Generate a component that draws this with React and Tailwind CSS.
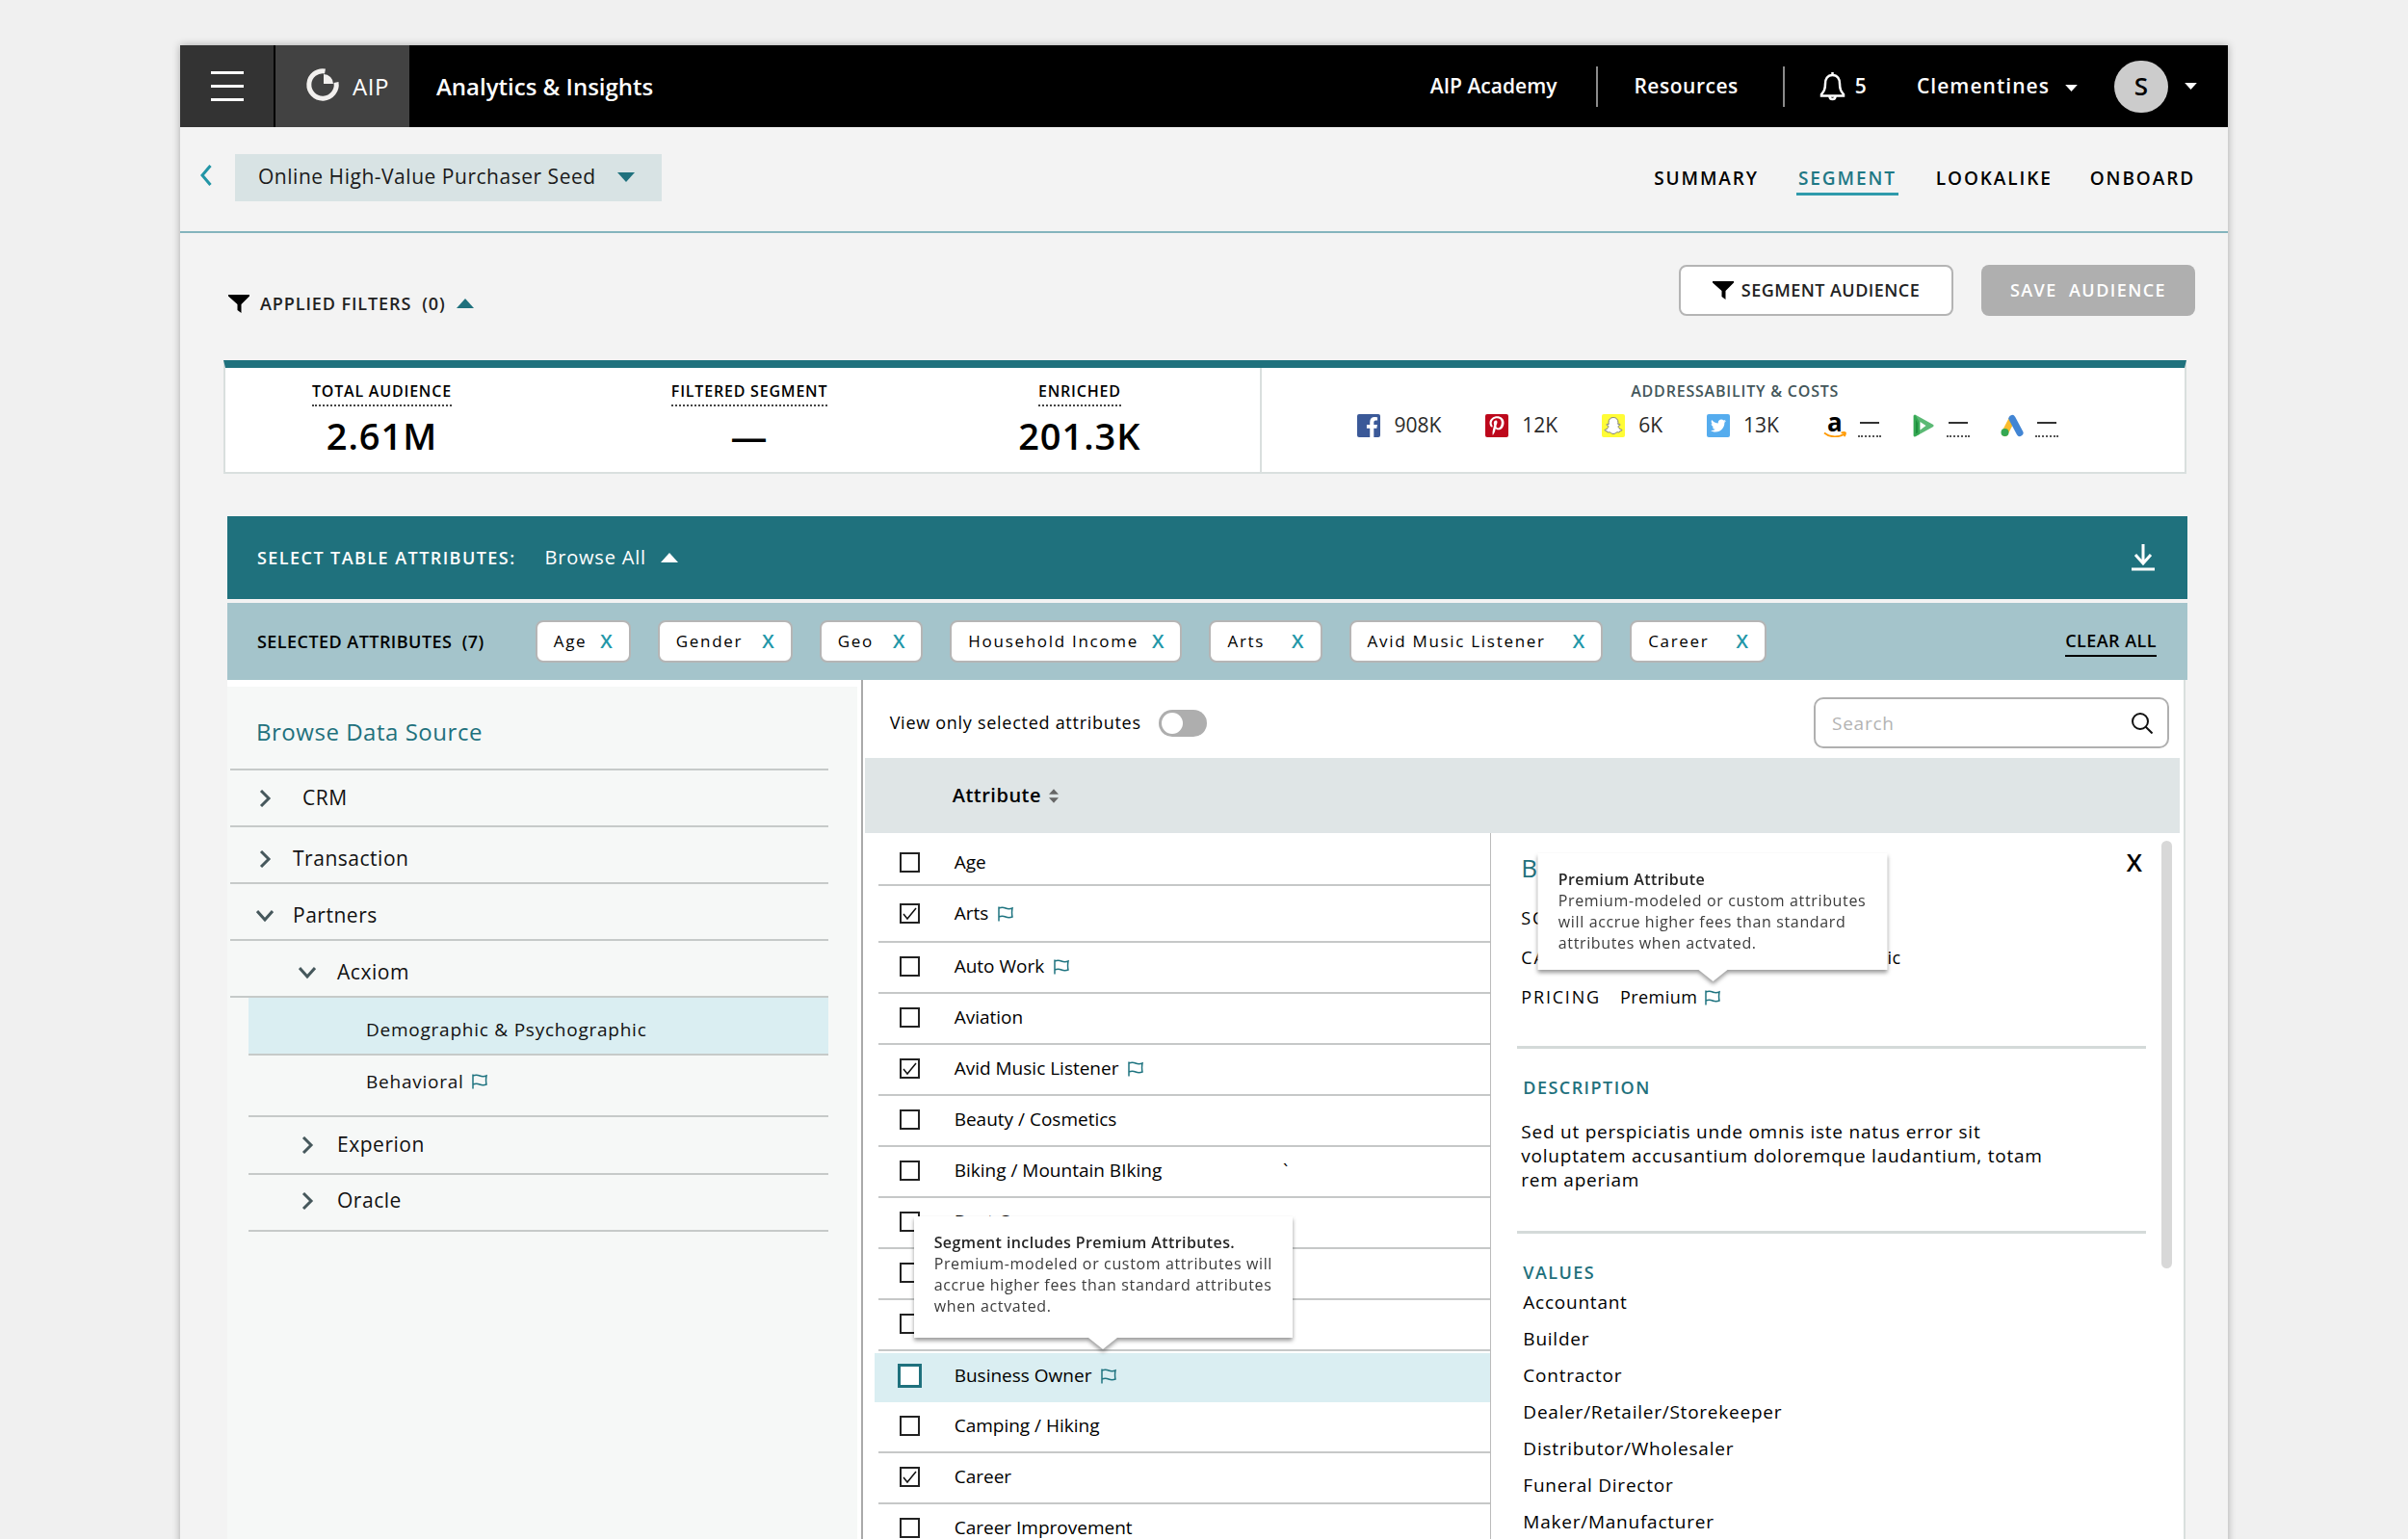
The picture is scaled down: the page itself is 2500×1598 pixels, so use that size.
import { useState } from "react";
import { FaFacebookF, FaPinterestP, FaSnapchatGhost, FaTwitter } from "react-icons/fa";

const tabs = ["SUMMARY", "SEGMENT", "LOOKALIKE", "ONBOARD"];

const chips = [
  { name: "Age", gap: "gap-[14px]" },
  { name: "Gender", gap: "gap-5" },
  { name: "Geo", gap: "gap-5" },
  { name: "Household Income", gap: "gap-[14px]" },
  { name: "Arts", gap: "gap-7" },
  { name: "Avid Music Listener", gap: "gap-7" },
  { name: "Career", gap: "gap-7" },
];

const attributes = [
  { name: "Age", height: "h-[55px] pt-2" },
  { name: "Arts", premium: true, checked: true, height: "h-[59px]" },
  { name: "Auto Work", premium: true },
  { name: "Aviation" },
  { name: "Avid Music Listener", premium: true, checked: true },
  { name: "Beauty / Cosmetics" },
  { name: "Biking / Mountain BIking", note: "`" },
  { name: "Boat Owner" },
  { name: "Book Reading" },
  { name: "Budget Shopping" },
  { name: "Business Owner", premium: true, active: true },
  { name: "Camping / Hiking" },
  { name: "Career", checked: true },
  { name: "Career Improvement" },
];

const values = [
  "Accountant",
  "Builder",
  "Contractor",
  "Dealer/Retailer/Storekeeper",
  "Distributor/Wholesaler",
  "Funeral Director",
  "Maker/Manufacturer",
];

const Triangle = ({ up, className }) => (
  <svg viewBox="0 0 18 10" className={className} fill="currentColor" aria-hidden="true">
    {up ? <path d="M0 10 9 0l9 10z" /> : <path d="M0 0h18L9 10z" />}
  </svg>
);

const Funnel = () => (
  <svg viewBox="0 0 22 19" className="h-[19px] w-[22px] shrink-0 text-black" fill="currentColor" aria-hidden="true">
    <path d="M0 0h22v1.500l-8.500 8.500v9l-4-3v-6L0 1.500z" />
  </svg>
);

const Flag = () => (
  <svg viewBox="0 0 16 16" className="h-4 w-4 shrink-0 text-[#1f7480]" fill="none" stroke="currentColor" strokeWidth="1.500" aria-hidden="true">
    <path d="M1 .5v15M1 2c2.500-1 4.500-1 7 0s4.500 1 7 0c-.6 3-.6 6 0 9-2.500 1-4.500 1-7 0s-4.500-1-7 0" />
  </svg>
);

const Chevron = ({ open }) => (
  <svg viewBox="0 0 18 18" className="h-[18px] w-[18px] shrink-0 text-[#46585c]" fill="none" stroke="currentColor" strokeWidth="3" aria-hidden="true">
    {open ? <path d="m1 4 8 9 8-9" /> : <path d="m5 1 8 8-8 8" />}
  </svg>
);

const Tooltip = ({ title, children, className }) => (
  <div role="tooltip" className={`absolute bottom-full z-10 drop-shadow-[0_3px_2px_rgba(0,0,0,0.4)] ${className}`}>
    <div className="h-full bg-white pt-4 pr-[19px] pl-[21px] text-[16px] leading-[22px] tracking-[0.04em] text-[#3c3c3c]">
      <p className="font-semibold tracking-wide text-[#262626]">{title}</p>
      <p>{children}</p>
    </div>
    <div className="absolute top-full left-1/2 h-0 w-0 -translate-x-1/2 border-x-[15px] border-t-[12px] border-x-transparent border-t-white" />
  </div>
);

const premiumText = "Premium-modeled or custom attributes will accrue higher fees than standard attributes when actvated.";

const Header = () => (
  <header className="flex h-[85px] items-stretch bg-black text-white">
    <button aria-label="Menu" className="flex w-[97px] flex-col items-center justify-center gap-[11px] bg-[#333]">
      <span className="h-[3px] w-[34px] bg-white" />
      <span className="h-[3px] w-[34px] bg-white" />
      <span className="h-[3px] w-[34px] bg-white" />
    </button>
    <a href="#home" className="ml-[2px] flex w-[139px] items-center gap-[13px] bg-[#424242] pl-[31px] text-[24px] tracking-wide">
      <svg viewBox="0 0 36 36" className="mb-1 h-9 w-9" fill="none" aria-hidden="true">
        <path d="M20.500 4A14.200 14.200 0 1 0 32 15.500" stroke="#f2f0ee" strokeWidth="5" />
        <path d="M19 7a10 10 0 0 1 10 10H19z" fill="#f2f0ee" />
      </svg>
      AIP
    </a>
    <h1 className="flex items-center pl-7 text-[24px] font-semibold">Analytics &amp; Insights</h1>
    <nav className="ml-auto flex items-center pr-8 text-[21px] font-semibold">
      <a href="#academy">AIP Academy</a>
      <span className="mr-[37px] ml-[41px] h-[42px] w-[2px] bg-[#8a8a8a]" />
      <a href="#resources" className="tracking-wide">Resources</a>
      <span className="mr-9 ml-[46px] h-[42px] w-[2px] bg-[#8a8a8a]" />
      <button aria-label="5 notifications" className="flex items-center gap-[10px]">
        <svg viewBox="0 0 27 30" className="h-[30px] w-[27px]" fill="none" stroke="currentColor" strokeWidth="2.500" aria-hidden="true">
          <path d="M13.500 3C8 3 6 7.500 6 12c0 6-1.500 8-4 11v1.500h23V23c-2.500-3-4-5-4-11 0-4.500-2-9-7.500-9zM13.500 3V0M10.500 25c0 4 6 4 6 0" />
        </svg>
        5
      </button>
      <button className="ml-[52px] flex items-center gap-4 tracking-wider">
        Clementines
        <Triangle className="mt-1 h-[7px] w-[13px]" />
      </button>
      <button aria-label="Account" className="ml-[38px] flex items-center gap-[17px]">
        <span className="flex h-[54px] w-14 items-center justify-center rounded-full bg-[#ccc] text-[26px] text-black">S</span>
        <Triangle className="h-[7px] w-[13px]" />
      </button>
    </nav>
  </header>
);

const SubHeader = () => (
  <div className="flex h-[110px] items-center border-b-2 border-[#84b4bd] pr-[34px] pb-1 pl-5">
    <a href="#back" aria-label="Back" className="pb-1 text-[#2295a6]">
      <svg viewBox="0 0 13 22" className="h-[22px] w-[13px]" fill="none" stroke="currentColor" strokeWidth="3" aria-hidden="true">
        <path d="M11.500 1 3 11l8.500 10" />
      </svg>
    </a>
    <button className="ml-6 flex h-[49px] items-center gap-[22px] bg-[#d8e3e4] pr-7 pl-6 text-[21px] tracking-wide text-[#1a1a1a]">
      Online High-Value Purchaser Seed
      <Triangle className="h-[10px] w-[18px] text-[#1f717d]" />
    </button>
    <nav className="ml-auto flex gap-[39px] pt-1 text-[19px] leading-[30px] font-semibold tracking-widest text-black">
      {tabs.map((tab) => (
        <a
          key={tab}
          href={`#${tab.toLowerCase()}`}
          className={tab === "SEGMENT" ? "border-b-[3px] border-[#2f9aab] px-[2px] text-[#1f7885]" : "border-b-[3px] border-transparent"}
        >
          {tab}
        </a>
      ))}
    </nav>
  </div>
);

const Stat = ({ label, value }) => (
  <div className="flex flex-col items-center font-semibold">
    <span className="border-b-2 border-dotted border-[#444] pb-[2px] text-[16px] leading-6 tracking-wider">{label}</span>
    <span className="text-[38px] leading-[60px] tracking-wide">{value}</span>
  </div>
);

const channels = [
  {
    label: "Facebook",
    value: "908K",
    icon: (
      <span className="flex h-6 w-6 items-end justify-end rounded-[2px] bg-[#3b5998] pr-[2px] text-white">
        <FaFacebookF className="h-[21px] w-[13px]" />
      </span>
    ),
  },
  {
    label: "Pinterest",
    value: "12K",
    icon: (
      <span className="flex h-6 w-6 items-center justify-center rounded-[2px] bg-[#bd081c] text-white">
        <FaPinterestP className="h-5 w-5" />
      </span>
    ),
  },
  {
    label: "Snapchat",
    value: "6K",
    icon: (
      <span className="flex h-6 w-6 items-center justify-center rounded-[2px] bg-[#fffc36] text-white">
        <FaSnapchatGhost className="h-[18px] w-[18px] overflow-visible" stroke="#777" strokeWidth="28" />
      </span>
    ),
  },
  {
    label: "Twitter",
    value: "13K",
    icon: (
      <span className="flex h-6 w-6 items-center justify-center rounded-[2px] bg-[#55acee] text-white">
        <FaTwitter className="h-4 w-4" />
      </span>
    ),
  },
  {
    label: "Amazon",
    icon: (
      <span className="relative flex h-6 w-6 justify-center text-[26px] leading-[16px] font-bold text-black">
        a
        <svg viewBox="0 0 24 24" className="absolute inset-0" fill="none" stroke="#f90" strokeWidth="1.800" aria-hidden="true">
          <path d="M1 19.500c6 5 15 5 21 1M18.500 19.500c2-.8 4.500-.8 4.500 0s-.5 2.500-1.500 3.500" />
        </svg>
      </span>
    ),
  },
  {
    label: "Display & Video 360",
    icon: (
      <svg viewBox="0 0 24 24" className="h-6 w-6" aria-hidden="true">
        <path d="M3 2 21 12 3 22z" fill="#5bb974" stroke="#5bb974" strokeWidth="3" strokeLinejoin="round" />
        <path d="M3 2v20l4-2V9z" fill="#1e8e3e" stroke="#34a853" strokeWidth="2" strokeLinejoin="round" />
        <path d="M8.500 8v8.500l6-4.500z" fill="#fff" />
      </svg>
    ),
  },
  {
    label: "Google Ads",
    icon: (
      <svg viewBox="0 0 24 24" className="h-6 w-6" fill="none" strokeWidth="7" strokeLinecap="round" aria-hidden="true">
        <path d="M4.500 19.500 11.500 6" stroke="#fbbc2c" />
        <path d="M12 4.500 20 19.500" stroke="#4285d4" />
        <circle cx="4.500" cy="19" r="4" fill="#34a853" />
      </svg>
    ),
  },
];

const Channel = ({ icon, label, value }) => (
  <li className={value ? "mr-[14px] flex items-center gap-[14px]" : "flex items-center gap-3"} aria-label={label}>
    {icon}
    {value ? (
      <span className="text-[21px] text-[#2a2a2a]">{value}</span>
    ) : (
      <span className="flex h-6 w-6 items-center justify-center border-b-2 border-dotted border-[#555] pb-1">
        <span className="h-[2px] w-5 bg-[#333]" />
      </span>
    )}
  </li>
);

const Check = ({ name, checked, active, onChange }) => (
  <span className="relative flex shrink-0">
    <input
      id={name}
      type="checkbox"
      checked={checked}
      onChange={onChange}
      className={active ? "h-[25px] w-[25px] appearance-none border-[3px] border-[#1f717d] bg-white" : "h-[21px] w-[21px] appearance-none border-2 border-[#222] bg-white"}
    />
    {checked && (
      <svg viewBox="0 0 21 21" className="pointer-events-none absolute inset-0" fill="none" stroke="#111" strokeWidth="1.500" aria-hidden="true">
        <path d="m4 11 4 5L17 5" />
      </svg>
    )}
  </span>
);

const AttributeRow = ({ item, checked, onToggle }) => (
  <li
    className={
      item.active
        ? "relative -ml-1 flex h-[53px] items-center gap-[34px] border-t-2 border-white bg-[#daeef2] pb-1 pl-6"
        : `flex items-center gap-9 border-b-2 border-[#c6c8c8] pl-[22px] ${item.height || "h-[53px] pb-[2px]"}`
    }
  >
    <Check name={item.name} checked={checked} active={item.active} onChange={onToggle} />
    <label htmlFor={item.name} className="flex items-center gap-[10px]">
      {item.name}
      {item.premium && <Flag />}
    </label>
    {item.note && <span className="mr-[210px] ml-auto">{item.note}</span>}
    {item.active && (
      <Tooltip title="Segment includes Premium Attributes." className="left-[41px] mb-4 h-[126px] w-[393px]">
        {premiumText}
      </Tooltip>
    )}
  </li>
);

const SourceRow = ({ label, open, sub, className, textClass }) => (
  <div className={`border-b-2 border-[#c6cac9] ${className}`}>
    <button className={`flex h-full items-center ${sub ? "gap-[22px]" : "gap-5"}`}>
      <Chevron open={open} />
      <span className={textClass}>{label}</span>
    </button>
  </div>
);

const Sidebar = () => (
  <aside className="mt-[7px] flex-1 bg-[#f6f8f7] pr-[30px] pl-[3px] text-[21px] tracking-wide text-[#111]">
    <h2 className="flex h-[87px] items-center border-b-2 border-[#c6cac9] pt-2 pl-[27px] text-[24px] text-[#1f717d]">Browse Data Source</h2>
    <SourceRow label="CRM" className="h-[59px] pl-[27px]" textClass="pl-[10px]" />
    <SourceRow label="Transaction" className="h-[59px] pt-2 pl-[27px]" />
    <SourceRow label="Partners" open className="h-[59px] pt-2 pl-[27px]" />
    <SourceRow label="Acxiom" open sub className="h-[59px] pt-2 pl-[71px]" />
    <div className="ml-[19px]">
      <button className="flex h-[60px] w-full items-center border-b-2 border-[#c6cac9] bg-[#daeef2] pt-2 pl-[122px] text-[19px] tracking-[0.04em]">
        Demographic &amp; Psychographic
      </button>
      <button className="flex h-16 w-full items-center gap-2 border-b-2 border-[#c6cac9] pb-2 pl-[122px] text-[19px] tracking-[0.04em]">
        Behavioral
        <Flag />
      </button>
      <SourceRow label="Experion" sub className="h-[60px] pl-[52px]" />
      <SourceRow label="Oracle" sub className="h-[59px] pb-1 pl-[52px]" />
    </div>
  </aside>
);

const Detail = () => (
  <section className="relative flex border-l border-[#bbb] pt-5 pl-[31px]">
    <div className="min-w-0 flex-1">
      <div className="flex h-8 items-start justify-between pr-1 text-[26px]">
        <h2 className="leading-8 text-[#1f717d]">Business Owner</h2>
        <button aria-label="Close" className="leading-5 font-semibold">X</button>
      </div>
      <dl className="mt-4 text-[18px] tracking-wide">
        <div className="flex h-[41px] items-center gap-5">
          <dt className="tracking-widest">SOURCE</dt>
          <dd>Acxiom</dd>
        </div>
        <div className="flex h-[41px] items-center gap-5">
          <dt className="tracking-widest">CATEGORY</dt>
          <dd>Demographic &amp; Psychographic</dd>
        </div>
        <div className="flex h-[41px] items-center gap-5">
          <dt className="tracking-widest">PRICING</dt>
          <dd className="flex items-center gap-2">
            Premium
            <span className="relative">
              <Flag />
              <Tooltip title="Premium Attribute" className="left-1/2 mb-[21px] h-[121px] w-[363px] -translate-x-1/2">
                {premiumText}
              </Tooltip>
            </span>
          </dd>
        </div>
      </dl>
      <hr className="mt-[30px] -ml-1 border-t-[3px] border-[#d4dad9]" />
      <h3 className="mt-7 pl-[2px] text-[18px] leading-6 font-semibold tracking-[0.08em] text-[#1f717d]">DESCRIPTION</h3>
      <p className="mt-[22px] max-w-[560px] text-[19px] leading-[25px] tracking-[0.04em]">
        Sed ut perspiciatis unde omnis iste natus error sit voluptatem accusantium doloremque laudantium, totam rem aperiam
      </p>
      <hr className="mt-10 -ml-1 border-t-[3px] border-[#d4dad9]" />
      <h3 className="mt-7 pl-[2px] text-[18px] leading-6 font-semibold tracking-[0.08em] text-[#1f717d]">VALUES</h3>
      <ul className="pl-[2px] text-[19px] leading-[38px] tracking-[0.04em]">
        {values.map((value) => (
          <li key={value}>{value}</li>
        ))}
      </ul>
    </div>
    <div className="-mt-3 mr-3 ml-4 h-[444px] w-[11px] rounded-full bg-[#d8d8d8]" />
  </section>
);

const App = () => {
  const [selected, setSelected] = useState(new Set(attributes.filter((a) => a.checked).map((a) => a.name)));

  const handleToggle = (name) => {
    setSelected((prev) => {
      const next = new Set(prev);
      next.has(name) ? next.delete(name) : next.add(name);
      return next;
    });
  };

  return (
    <div className="h-screen overflow-hidden bg-[#f0f0f0] px-[187px] pt-[47px] font-['Open_Sans',sans-serif] text-black">
      <div className="min-h-full bg-[#f3f3f3] shadow-[0_0_8px_rgba(0,0,0,0.3)]">
        <Header />
        <SubHeader />

        <div className="flex items-end pt-[33px] pr-[34px] pl-[50px]">
          <button className="flex h-[26px] items-center gap-[11px] text-[18px] font-semibold tracking-wider text-[#222]">
            <Funnel />
            <span>APPLIED FILTERS</span>
            <span>(0)</span>
            <Triangle up className="h-[10px] w-[18px] text-[#1f717d]" />
          </button>
          <button className="ml-auto flex h-[53px] w-[285px] items-center justify-center gap-2 rounded-lg border-2 border-[#b4b4b4] bg-white text-[18px] font-semibold tracking-wide text-[#222]">
            <Funnel />
            SEGMENT AUDIENCE
          </button>
          <button className="ml-[29px] h-[53px] w-[222px] rounded-lg bg-[#afafaf] text-[18px] font-semibold tracking-[0.08em] whitespace-pre text-white">
            {"SAVE  AUDIENCE"}
          </button>
        </div>

        {/* Audience totals */}
        <section className="mt-[46px] mr-[43px] ml-[45px] grid h-[118px] grid-cols-[1076fr_961fr] border-2 border-t-8 border-[#d9dfde] border-t-[#1f717d] bg-white">
          <div className="grid grid-cols-[326fr_440fr_248fr] pt-3 pr-16">
            <Stat label="TOTAL AUDIENCE" value="2.61M" />
            <Stat label="FILTERED SEGMENT" value="—" />
            <Stat label="ENRICHED" value="201.3K" />
          </div>
          <div className="border-l-2 border-[#d9dfde] pt-3">
            <h2 className="pl-6 text-center text-[16px] leading-6 font-semibold tracking-wider text-[#43565a]">ADDRESSABILITY &amp; COSTS</h2>
            <ul className="flex gap-8 pt-2 pl-[99px]">
              {channels.map((c) => (
                <Channel key={c.label} {...c} />
              ))}
            </ul>
          </div>
        </section>

        {/* Attribute table */}
        <section className="mt-11 mr-[42px] ml-[49px]">
          <div className="flex h-[86px] items-center bg-[#1f717d] pr-[34px] pl-[31px] text-white">
            <span className="text-[18px] font-semibold tracking-[0.08em]">SELECT TABLE ATTRIBUTES:</span>
            <button className="ml-[30px] flex items-center gap-[15px] text-[20px] tracking-[0.04em]">
              Browse All
              <Triangle up className="h-[10px] w-[18px]" />
            </button>
            <button aria-label="Download" className="ml-auto">
              <svg viewBox="0 0 24 28" className="h-7 w-6" fill="none" stroke="currentColor" strokeWidth="3" aria-hidden="true">
                <path d="M12 0v20M4 11l8 9 8-9M0 26h24" />
              </svg>
            </button>
          </div>
          <div className="mt-1 flex h-20 items-center bg-[#a4c4cb] pr-[32px] pl-[31px] text-[18px] tracking-wide">
            <span className="font-semibold whitespace-pre">{"SELECTED ATTRIBUTES  (7)"}</span>
            <ul className="ml-[53px] flex gap-7">
              {chips.map((chip) => (
                <li
                  key={chip.name}
                  className={`flex h-11 items-center rounded-lg border-2 border-[#b5b5b5] bg-white px-[17px] text-[17px] tracking-widest ${chip.gap}`}
                >
                  {chip.name}
                  <button aria-label={`Remove ${chip.name}`} className="text-[20px] font-semibold tracking-normal text-[#2297a8]">X</button>
                </li>
              ))}
            </ul>
            <button className="ml-auto border-b-2 border-black leading-[30px] font-semibold">CLEAR ALL</button>
          </div>

          <div className="mr-[2px] grid grid-cols-[658fr_1374fr] border-r-2 border-[#d9dfde] bg-white">
            <div className="flex pr-1">
              <Sidebar />
            </div>
            <div className="border-l-2 border-[#aaa]">
              <div className="flex h-[81px] items-center pt-2 pr-[15px] pl-7">
                <label htmlFor="only" className="text-[18px] tracking-[0.04em]">View only selected attributes</label>
                <input
                  id="only"
                  type="checkbox"
                  role="switch"
                  className="ml-[18px] h-7 w-[50px] appearance-none rounded-full bg-[#aeaeae] before:mt-[3px] before:ml-[3px] before:block before:h-[22px] before:w-[22px] before:rounded-full before:bg-white"
                />
                <div className="relative ml-auto">
                  <input
                    aria-label="Search"
                    placeholder="Search"
                    className="h-[53px] w-[369px] rounded-[10px] border-2 border-[#b0b0b0] pl-[17px] text-[19px] tracking-[0.04em] placeholder:text-[#b3b3b3]"
                  />
                  <svg viewBox="0 0 22 22" className="absolute top-[16px] right-[17px] h-[22px] w-[22px]" fill="none" stroke="#111" strokeWidth="2" aria-hidden="true">
                    <circle cx="9" cy="9" r="8" />
                    <path d="m14.500 14.500 7 7" />
                  </svg>
                </div>
              </div>
              <div className="mr-1 ml-[2px] flex h-[78px] items-center bg-[#dfe5e6] pl-[91px]">
                <button className="flex items-center gap-2 text-[20px] font-semibold tracking-wide">
                  Attribute
                  <span className="flex flex-col gap-[3px] text-[#666]">
                    <Triangle up className="h-[6px] w-[10px]" />
                    <Triangle className="h-[6px] w-[10px]" />
                  </span>
                </button>
              </div>
              <div className="grid grid-cols-[652fr_720fr]">
                <ul className="pl-4 text-[19px]">
                  {attributes.map((item) => (
                    <AttributeRow
                      key={item.name}
                      item={item}
                      checked={selected.has(item.name)}
                      onToggle={() => handleToggle(item.name)}
                    />
                  ))}
                </ul>
                <Detail />
              </div>
            </div>
          </div>
        </section>
      </div>
    </div>
  );
};

export default App;
